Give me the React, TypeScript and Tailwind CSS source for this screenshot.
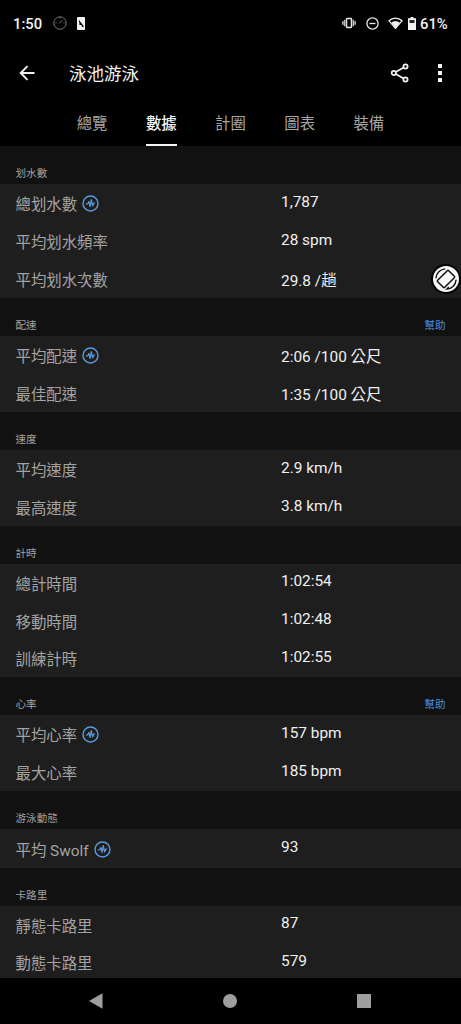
import { clsx } from "clsx";

type Row = {
  label: string;
  value: string;
  sensor?: boolean;
  cjk?: boolean; // value carries a Chinese unit, so it sits a bit lower
};

type Section = {
  title: string;
  help?: boolean;
  height: string;
  rows: Row[];
};

const tabs = ["總覽", "數據", "計圈", "圖表", "裝備"];

const sections: Section[] = [
  {
    title: "划水數",
    height: "h-[114px]",
    rows: [
      { label: "總划水數", value: "1,787", sensor: true },
      { label: "平均划水頻率", value: "28 spm" },
      { label: "平均划水次數", value: "29.8 /趟", cjk: true },
    ],
  },
  {
    title: "配速",
    help: true,
    height: "h-[76px]",
    rows: [
      { label: "平均配速", value: "2:06 /100 公尺", sensor: true, cjk: true },
      { label: "最佳配速", value: "1:35 /100 公尺", cjk: true },
    ],
  },
  {
    title: "速度",
    height: "h-[76px]",
    rows: [
      { label: "平均速度", value: "2.9 km/h" },
      { label: "最高速度", value: "3.8 km/h" },
    ],
  },
  {
    title: "計時",
    height: "h-[113px]",
    rows: [
      { label: "總計時間", value: "1:02:54" },
      { label: "移動時間", value: "1:02:48" },
      { label: "訓練計時", value: "1:02:55" },
    ],
  },
  {
    title: "心率",
    help: true,
    height: "h-[76px]",
    rows: [
      { label: "平均心率", value: "157 bpm", sensor: true },
      { label: "最大心率", value: "185 bpm" },
    ],
  },
  {
    title: "游泳動態",
    height: "h-[39px]",
    rows: [{ label: "平均 Swolf", value: "93", sensor: true }],
  },
  {
    title: "卡路里",
    height: "h-[75px]",
    rows: [
      { label: "靜態卡路里", value: "87" },
      { label: "動態卡路里", value: "579" },
    ],
  },
];

function StatusBar() {
  return (
    <div className="flex h-[46px] shrink-0 items-center justify-between pl-[13px] pr-[12px] text-[14.8px] font-medium text-[#f2f2f2]">
      <div className="flex items-center">
        <span className="w-[40px] pt-[2px]">1:50</span>
        <svg className="h-[14px] w-[14px]" viewBox="0 0 14 14" fill="none" stroke="#777" strokeWidth="1">
          <circle cx="7" cy="7" r="6.2" />
          <path d="M6.5 7.5 9.3 4.2M7 1v1.5M2.5 7h1M10.5 7h1" />
        </svg>
        <svg className="ml-[10px] h-[13px] w-[8px]" viewBox="0 0 8 13">
          <rect width="8" height="13" rx="0.7" fill="#f2f2f2" />
          <path d="M1.6 2.5 6.5 8.8V10H4.8V8H2.4V6z" fill="#000" />
        </svg>
      </div>
      <div className="flex items-center">
        <svg className="h-[12px] w-[14px]" viewBox="0 0 14 12">
          <rect x="4.5" y="1.5" width="5" height="9" rx="0.7" fill="none" stroke="#e8e8e8" strokeWidth="1.5" />
          <path d="M2.6 2.8v6.4M11.4 2.8v6.4M0.8 4.3v3.4M13.2 4.3v3.4" stroke="#bdbdbd" strokeWidth="1.5" />
        </svg>
        <svg className="ml-[10px] h-[13px] w-[13px]" viewBox="0 0 13 13" fill="none" stroke="#e8e8e8" strokeWidth="1.3">
          <circle cx="6.5" cy="6.5" r="5.6" />
          <path d="M3.5 6.5h6" />
        </svg>
        <svg className="ml-[9px] h-[12px] w-[15px]" viewBox="0 0 15 12">
          <path d="M1 3.8C4.8.1 10.2.1 14 3.8L7.5 11.4z" fill="none" stroke="#f2f2f2" strokeWidth="1.2" />
          <path d="M3.3 5.6C5.7 3.7 9.3 3.7 11.7 5.6L7.5 11.2z" fill="#f2f2f2" />
        </svg>
        <svg className="ml-[5px] h-[13px] w-[8px]" viewBox="0 0 8 13">
          <path d="M2.5 0h3v1.3H8V13H0V1.3h2.5z" fill="#f2f2f2" />
          <path d="M1.5 3h5v3h-5z" fill="#222" />
        </svg>
        <span className="ml-[4px] w-[29px] whitespace-nowrap pt-[2px]">61%</span>
      </div>
    </div>
  );
}

function AppBar() {
  return (
    <div className="flex h-[54px] shrink-0 items-center pl-[19px] pr-[18px] text-[#f2f2f2]">
      <svg className="h-[16px] w-[16px]" viewBox="0 0 16 16" fill="none" stroke="currentColor" strokeWidth="1.9">
        <path d="M15.5 8H2M8.5 1.2 1.7 8l6.8 6.8" />
      </svg>
      <h1 className="ml-[34px] flex-1 pt-[2px] text-[17.5px] leading-6">泳池游泳</h1>
      <svg className="h-[20px] w-[20px]" viewBox="0 0 20 20" fill="none" stroke="currentColor" strokeWidth="1.8">
        <circle cx="3.8" cy="10" r="2.1" />
        <circle cx="15.5" cy="3.5" r="2.1" />
        <circle cx="15.5" cy="16.5" r="2.1" />
        <path d="m5.7 9 8-4.5M5.7 11l8 4.5" />
      </svg>
      <div className="ml-[28px] mr-px flex flex-col gap-[3px]">
        <span className="h-[4px] w-[4px] bg-[#f2f2f2]" />
        <span className="h-[4px] w-[4px] bg-[#f2f2f2]" />
        <span className="h-[4px] w-[4px] bg-[#f2f2f2]" />
      </div>
    </div>
  );
}

function SensorIcon() {
  return (
    <svg className="-mt-[3px] ml-[5px] h-[17px] w-[17px]" viewBox="0 0 17 17" fill="none" stroke="#5b9ce0">
      <circle cx="8.5" cy="8.5" r="7.5" strokeWidth="1.4" />
      <path d="M3.8 9h1.7l1.4-2.5 1.2 5L9.3 4.7l1.3 6.2L11.8 8h1.4" strokeWidth="1.2" strokeLinejoin="round" />
    </svg>
  );
}

function RotateButton() {
  return (
    <button type="button" className="absolute left-[430.5px] top-[264px]">
      <svg className="h-[30px] w-[30px]" viewBox="0 0 30 30" fill="none" stroke="#111">
        <circle cx="15" cy="15" r="15" fill="#000" stroke="none" />
        <circle cx="15" cy="15" r="13" fill="#f7f7f7" stroke="none" />
        <rect x="10" y="7.2" width="10" height="15.6" rx="1" strokeWidth="1.5" transform="rotate(45 15 15)" />
        <path d="M4.9 14.3C5.2 9.2 9.2 5.3 14.2 4.9M25.1 15.7c-.3 5.1-4.3 9-9.3 9.4l2-2.2" strokeWidth="1.4" />
      </svg>
    </button>
  );
}

export default function App() {
  return (
    <main className="relative flex h-[1024px] w-[461px] flex-col overflow-hidden bg-black font-['Roboto','Noto_Sans_CJK_TC',sans-serif]">
      <StatusBar />
      <AppBar />

      {/* Tabs */}
      <nav className="flex h-[46px] shrink-0 justify-center">
        {tabs.map((tab, i) => (
          <button
            key={tab}
            type="button"
            className={clsx(
              "flex w-[69.2px] flex-col items-center justify-between pt-[12px] text-[15.4px] leading-6",
              i === 1 ? "font-medium text-[#f5f5f5]" : "text-[#a6a6a6]"
            )}
          >
            {tab}
            {i === 1 && <span className="h-[2px] w-[31px] bg-[#f5f5f5]" />}
          </button>
        ))}
      </nav>

      {/* Stats, the last row runs under the navigation bar */}
      <div className="min-h-0 flex-1 overflow-hidden bg-[#111111]">
        {sections.map((section) => (
          <section key={section.title}>
            <div className="flex h-[38px] items-end justify-between px-[15.5px] pb-[2px] text-[10.6px] leading-4 text-[#a0a0a0]">
              <h2>{section.title}</h2>
              {section.help && <span className="text-[#4d8fdc]">幫助</span>}
            </div>
            <div className={clsx("flex flex-col bg-[#1e1e1e]", section.height)}>
              {section.rows.map((row) => (
                <div key={row.label} className="flex flex-1 items-center text-[15.4px] leading-6">
                  <div className="flex w-[281px] items-center pl-[15.5px] pt-[4px] text-[#a3a3a3]">
                    {row.label}
                    {row.sensor && <SensorIcon />}
                  </div>
                  <span className={clsx("text-[#f0f0f0]", row.cjk ? "pt-[4px]" : "pb-[3px]")}>{row.value}</span>
                </div>
              ))}
            </div>
          </section>
        ))}
      </div>

      {/* Android navigation */}
      <div className="flex h-[46px] shrink-0 items-center justify-between pl-[89px] pr-[90px]">
        <svg className="h-[16px] w-[14px]" viewBox="0 0 14 16" fill="#9e9e9e">
          <path d="M0 8 13.5.3v15.4z" />
        </svg>
        <span className="h-[14px] w-[14px] rounded-full bg-[#9e9e9e]" />
        <span className="h-[14px] w-[14px] bg-[#9e9e9e]" />
      </div>

      <RotateButton />
    </main>
  );
}
